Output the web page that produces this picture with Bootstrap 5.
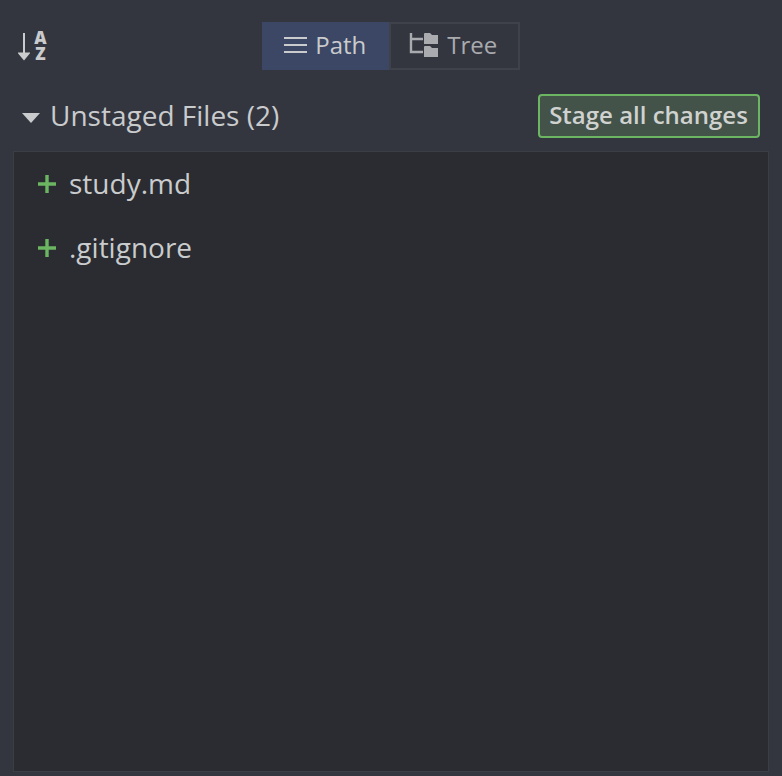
<!DOCTYPE html>
<html lang="en">
<head>
    <meta charset="UTF-8">
    <meta name="viewport" content="width=device-width, initial-scale=1.0">
    <title>Unstaged Files</title>
    <link href="https://cdn.jsdelivr.net/npm/bootstrap@5.3.0/dist/css/bootstrap.min.css" rel="stylesheet">
    <style>
        html, body { height: 100%; }
        body { background: #33363f; color: #c9cbcd; font-family: "Open Sans", sans-serif; font-size: 28px; overflow: hidden; }
        .pane { height: 776px; padding: 22px 13px 4px 13px; }
        .toolbar { height: 48px; }
        .sort-icon { width: 34px; margin-left: 5px; gap: 3px; }
        .sort-letters { width: 15px; font-weight: 800; font-size: 17px; line-height: 16px; text-align: center; }
        .view-switch { width: 258px; margin-left: 210px; }
        .view-btn { height: 48px; font-size: 24px; line-height: 1; color: #c9cbcd; border: 2px solid #3f424a; border-radius: 0; background: transparent; padding: 0 0 2px 0; }
        .view-btn:hover { color: #c9cbcd; border-color: #3f424a; }
        .view-path { width: 127px; background: #3b4764; border-color: #3b4764; padding-right: 1px; }
        .view-path:hover { background: #3b4764; border-color: #3b4764; }
        .view-tree { width: 131px; color: #a9abaf; padding-right: 2px; }
        .view-tree:hover { color: #a9abaf; }
        .section-head { height: 44px; margin-top: 24px; margin-right: 9px; }
        .section-title { font-size: 28px; line-height: 42px; color: #c9cbcd; margin-left: 10px; padding-bottom: 3px; }
        .caret-down { width: 0; height: 0; border-left: 9px solid transparent; border-right: 9px solid transparent; border-top: 10px solid #c9cbcd; margin-left: 9px; margin-top: 3px; }
        .stage-btn { width: 222px; height: 44px; padding: 0 1px 2px 0; font-size: 24px; line-height: 1; font-weight: 600; color: #cfd2cf; background: #44534a; border: 2px solid #6cb562; border-radius: 4px; }
        .stage-btn:hover { color: #cfd2cf; background: #44534a; border-color: #6cb562; }
        .file-panel { height: 621px; margin-top: 13px; background: #2a2c31; border: 1px solid #3b3e45; }
        .file-row { height: 64px; padding: 0 0 2px 23px; gap: 12px; color: #c9cbcd; font-size: 28px; background: transparent; border: 0; }
        .file-plus { margin-top: 2px; }
    </style>
</head>
<body>
    <div class="pane d-flex flex-column">
        <div class="toolbar d-flex align-items-center">
            <div class="sort-icon d-flex align-items-center">
                <svg width="12" height="30" viewBox="0 0 12 30" aria-hidden="true">
                    <path d="M6 2V26M1.500 22.500L6 28L10.500 22.500Z" fill="#c9cbcd" stroke="#c9cbcd" stroke-width="2"/>
                </svg>
                <div class="sort-letters d-flex flex-column">
                    <div>A</div>
                    <div>Z</div>
                </div>
            </div>
            <div class="view-switch btn-group" role="group">
                <button type="button" class="btn view-btn view-path d-flex align-items-center justify-content-center gap-2">
                    <svg width="23" height="18" viewBox="0 0 23 18" aria-hidden="true"><path d="M0 2H23M0 9H23M0 16H23" stroke="#c9cbcd" stroke-width="2.200"/></svg>
                    Path
                </button>
                <button type="button" class="btn view-btn view-tree d-flex align-items-center justify-content-center gap-2">
                    <svg width="30" height="24" viewBox="0 0 30 24" aria-hidden="true">
                        <path d="M2 0V19H14M2 6H14" fill="none" stroke="#a9abaf" stroke-width="2.400"/>
                        <path d="M15 1Q15 0 16 0H21L23 2H29V11H15ZM15 14Q15 13 16 13H21L23 15H29V24H15Z" fill="#a9abaf"/>
                    </svg>
                    Tree
                </button>
            </div>
        </div>
        <div class="section-head d-flex align-items-center">
            <span class="caret-down"></span>
            <span class="section-title flex-grow-1">Unstaged Files (2)</span>
            <button type="button" class="btn stage-btn">Stage all changes</button>
        </div>
        <div class="file-panel list-group rounded-0">
            <div class="file-row list-group-item d-flex align-items-center">
                <svg class="file-plus" width="20" height="20" viewBox="0 0 20 20" aria-hidden="true"><path d="M10 1V19M1 10H19" stroke="#6cb562" stroke-width="3.400"/></svg>
                <span>study.md</span>
            </div>
            <div class="file-row list-group-item d-flex align-items-center">
                <svg class="file-plus" width="20" height="20" viewBox="0 0 20 20" aria-hidden="true"><path d="M10 1V19M1 10H19" stroke="#6cb562" stroke-width="3.400"/></svg>
                <span>.gitignore</span>
            </div>
        </div>
    </div>
    <script src="https://cdn.jsdelivr.net/npm/bootstrap@5.3.0/dist/js/bootstrap.bundle.min.js"></script>
</body>
</html>
